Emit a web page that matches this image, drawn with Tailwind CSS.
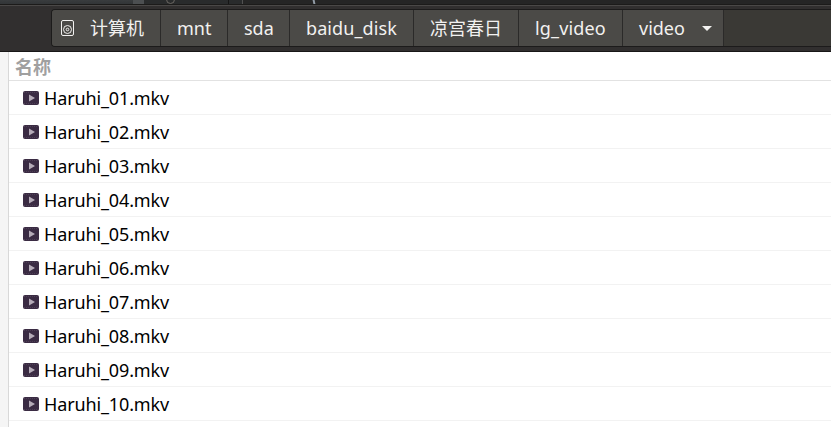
<!DOCTYPE html>
<html lang="zh-CN">
<head>
<meta charset="utf-8">
<title>video</title>
<script src="https://cdn.jsdelivr.net/npm/@tailwindcss/browser@4"></script>
</head>
<body class="h-[427px] w-[831px] overflow-hidden bg-white font-['Noto_Sans','Noto_Sans_CJK_SC',sans-serif] text-[18px]">
<div class="flex h-full flex-col">
  <div class="flex h-[5px] shrink-0 overflow-hidden border-b border-[#1c1b1a] bg-[#252525]">
    <div class="w-[133px] bg-linear-to-b from-[#393c3e] to-[#323537]"></div>
    <div class="w-[11px] bg-[#4c4f51]"></div>
    <div class="w-[84px] bg-[#292b2c] pl-[22px]"><div class="-mt-[5px] h-[9px] w-[9px] rounded-full border border-[#6b6762]"></div></div>
    <div class="w-px bg-[#151515]"></div>
    <div class="w-[13px] bg-[#292b2c]"></div>
    <div class="w-px bg-[#515151]"></div>
    <div class="w-[70px]"></div>
    <div class="w-[2px] skew-x-12 bg-[#929ba5]"></div>
  </div>
  <header class="flex h-[47px] shrink-0 flex-col border-t border-b border-t-[#4a4847] border-b-[#181717] bg-[#312f2f] pt-[3px]">
    <nav class="ml-[51px] flex h-[38px] rounded-l-[4px] border-y border-l border-[#1c1b1b] bg-[#3a3935] text-[#f2f1f0]">
      <div class="flex w-[109px] items-center rounded-l-[3px] border-r border-[#2b2a29] bg-[#4b4a47] pl-[9px]">
        <svg class="mr-[15px] h-[16px] w-[14px]" viewBox="0 0 14 16" fill="none" stroke="#f2f1f0"><rect x=".5" y=".5" width="12" height="15" rx="1.5"/><circle cx="6.5" cy="9.5" r="4"/><circle cx="6.5" cy="9.5" r="1.3"/></svg>
        <span>计算机</span>
      </div>
      <div class="flex w-[67px] items-center border-r border-[#2b2a29] bg-[#4b4a47] pl-[16px]">mnt</div>
      <div class="flex w-[62px] items-center border-r border-[#2b2a29] bg-[#4b4a47] pl-[16px]">sda</div>
      <div class="flex w-[124px] items-center border-r border-[#2b2a29] bg-[#4b4a47] pl-[16px] tracking-[0.1px]">baidu_disk</div>
      <div class="flex w-[105px] items-center border-r border-[#2b2a29] bg-[#4b4a47] pl-[16px]">凉宫春日</div>
      <div class="flex w-[104px] items-center border-r border-[#2b2a29] bg-[#4b4a47] pl-[16px] tracking-[0.15px]">lg_video</div>
      <div class="flex w-[101px] items-center justify-between border-r border-[#2b2a29] bg-[#4b4a47] pr-[11px] pl-[16px]">video
        <svg class="h-[5px] w-[10px]" viewBox="0 0 10 5"><path d="M0 0h10L5 5z" fill="#f2f1f0"/></svg>
      </div>
    </nav>
  </header>
  <div class="flex flex-1">
    <div class="w-[9px] border-r border-[#d8d8d8] bg-[#f5f5f5]"></div>
    <main class="flex-1 text-black">
      <div class="flex h-[29px] items-center border-b border-[#e2e2e2] pt-[2px] pl-[6px] font-bold text-[#a0a0a0]">名称</div>
      <div id="files"></div>
    </main>
  </div>
</div>
<template id="row">
  <div class="flex h-[34px] items-center border-b border-[#f2f2f2] pl-[14px]">
    <svg class="mr-[5px] h-[14px] w-[16px]" viewBox="0 0 16 14"><rect width="16" height="14" rx="2" fill="#3a2b43"/><path d="M1 1.5h14M1 12.5h14" stroke="#4d3f55" stroke-dasharray="1 1"/><path d="M6 3.5v7l6-3.5z" fill="#b5acb8"/></svg>
    <span class="pt-[2px] tracking-[-0.13px]"></span>
  </div>
</template>
<script>
for (let i = 1; i <= 10; i++) {
  const row = document.getElementById('row').content.cloneNode(true);
  row.querySelector('span').textContent = 'Haruhi_' + String(i).padStart(2, '0') + '.mkv';
  document.getElementById('files').append(row);
}
</script>
</body>
</html>
